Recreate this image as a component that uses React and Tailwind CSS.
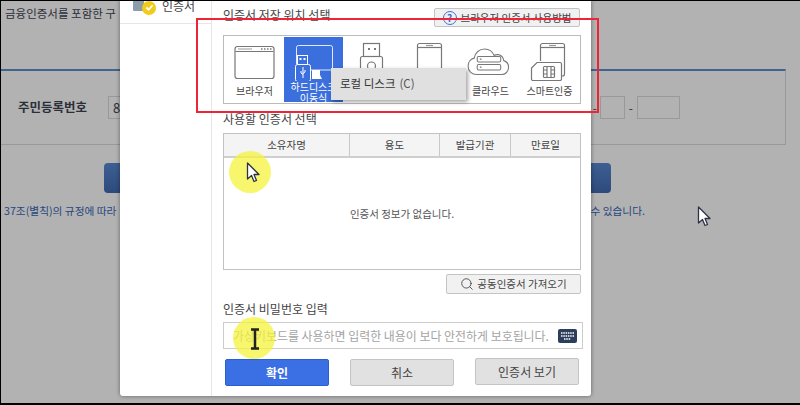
import { Search } from 'lucide-react';

const FONT = "font-['Noto_Sans_CJK_KR','Noto_Sans',sans-serif]";

const BrowserIcon = () => (
  <svg width="60" height="40" viewBox="0 0 60 40" fill="none" stroke="#777" strokeWidth="1.2">
    <rect x="10" y="5.500" width="39" height="32" rx="2.500" />
    <path d="M10.500 10.500h38" />
    <path d="M13 8h14" stroke="#aaa" />
    <path d="M36 8h1.500M39 8h1.500M42 8h1.500M45 8h1.500" strokeWidth="1.6" />
  </svg>
);

const DiskIcon = () => (
  <svg width="60" height="40" viewBox="0 0 60 40" fill="none" stroke="#fff" strokeWidth="1">
    <path d="M12.500 23V6.500a2 2 0 0 1 2-2h32a2 2 0 0 1 2 2V29H27" strokeOpacity=".85" />
    <path d="M28 29h8v5l2 4H28z" fill="#fff" stroke="none" />
    <rect x="13.500" y="14.500" width="10" height="9" fill="#3b6fdd" />
    <rect x="15.500" y="17" width="2" height="2" fill="#fff" stroke="none" />
    <rect x="19.500" y="17" width="2" height="2" fill="#fff" stroke="none" />
    <rect x="11.500" y="23.500" width="15" height="17" rx="2" fill="#3b6fdd" />
    <path d="M19 26v11M17 30v2l2 1.500M21 29v2l-2 1.500" />
  </svg>
);

const TokenIcon = () => (
  <svg width="60" height="40" viewBox="0 0 60 40" fill="none" stroke="#777" strokeWidth="1.2">
    <rect x="20.500" y="2.500" width="16" height="13" />
    <rect x="25" y="7" width="2" height="2" fill="#777" stroke="none" />
    <rect x="31" y="7" width="2" height="2" fill="#777" stroke="none" />
    <rect x="17.500" y="15.500" width="22" height="24" rx="2" />
    <circle cx="28.500" cy="25" r="4" />
    <path d="M23 36c0-5 11-5 11 0" />
  </svg>
);

const PhoneIcon = () => (
  <svg width="60" height="40" viewBox="0 0 60 40" fill="none" stroke="#777" strokeWidth="1.2">
    <path d="M15.500 40V4.500a2 2 0 0 1 2-2h20a2 2 0 0 1 2 2V40" />
    <path d="M16 6.500h23" />
    <path d="M24 4.500h7" stroke="#999" />
  </svg>
);

const CloudIcon = () => (
  <svg width="60" height="40" viewBox="0 0 60 40" fill="none" stroke="#777" strokeWidth="1.2">
    <g transform="translate(1 0) scale(.87 1)">
      <path d="M17 33.500c-6 0-10-3.600-10-8.300 0-4 3-7.200 7-8 1-5.500 6-9.200 12-9.200 5 0 9 2.500 11 6.500 1.500-.8 3-1 4.500-.8 3.500.5 6 3 6.500 6 3.500 1 5.500 3.500 5.500 6.500 0 4.300-3.500 7.300-8 7.300z" />
      <rect x="17.500" y="15.500" width="27" height="5.500" rx="1.500" />
      <rect x="17.500" y="23.500" width="27" height="5.500" rx="1.500" />
      <path d="M20.500 18.200h2M20.500 26.200h2" />
    </g>
  </svg>
);

const SmartIcon = () => (
  <svg width="60" height="40" viewBox="0 0 60 40" fill="none" stroke="#777" strokeWidth="1.2">
    <g transform="translate(6 0)">
      <path d="M14.500 20V4.500a2 2 0 0 1 2-2h20a2 2 0 0 1 2 2V33a2 2 0 0 1-2 2h-2" />
      <path d="M15 6.500h23" />
      <path d="M23 4.500h7" stroke="#999" />
      <path d="M11 21.500h23a1.500 1.500 0 0 1 1.500 1.500v15a1.500 1.500 0 0 1-1.500 1.500H7a1.500 1.500 0 0 1-1.500-1.500V27z" fill="#fff" />
      <rect x="17.500" y="25.500" width="11" height="11" rx="1" />
      <path d="M21 26v10M25 26v10M18 29h3M18 33h3M25 29h3M25 33h3" />
    </g>
  </svg>
);

const Arrow = ({ className }) => (
  <svg className={className} width="14" height="22" viewBox="0 0 14 22">
    <path d="M1.500 1v16l4-3.500 2.500 6 2.500-1-2.500-6H13z" fill="#fff" stroke="#2c3345" strokeWidth="1.300" strokeLinejoin="round" />
  </svg>
);

const Tile = ({ icon, label, active }) => (
  <div className={`flex-1 min-w-0 flex flex-col items-center pt-[4px] ${active ? 'bg-[#3b6fdd] text-white' : 'text-[#444]'}`}>
    <div className="h-[40px]">{icon}</div>
    <div className={`mt-auto text-center whitespace-nowrap text-[10px] leading-[11px] ${active ? 'pb-[2px]' : 'pb-[6px]'}`}>{label}</div>
  </div>
);

const columns = [
  { label: '소유자명', w: 'w-[126px]' },
  { label: '용도', w: 'w-[90px]' },
  { label: '발급기관', w: 'w-[71px]' },
  { label: '만료일', w: 'flex-1' },
];

export default function App() {
  return (
    <div className={`${FONT} relative w-[800px] h-[405px] overflow-hidden bg-[#b2b2b2] border-l border-t border-b-2 border-black`}>
      {/* dimmed page behind the dialog */}
      <div className="w-[785px] pt-[3px] text-[#2b2f38]">
        <div className="pl-[4px] text-[11.500px] leading-[18px]">금융인증서를 포함한 구</div>
        <div className="mt-[47px] h-[76px] border-t-2 border-r border-b border-t-[#3e648f] border-r-[#999] border-b-[#999] flex items-center">
          <div className="ml-[17px] w-[90px] text-[12.500px] font-bold">주민등록번호</div>
          <div className="w-[40px] h-[23px] border border-[#999] text-[13px] pl-[4px] leading-[21px]">8</div>
          <div className="ml-auto flex items-center mr-[105px]">
            <span className="text-[12px] mr-[3px]">-</span>
            <div className="w-[25px] h-[23px] border border-[#999]" />
            <span className="text-[12px] mx-[4px]">-</span>
            <div className="w-[43px] h-[23px] border border-[#999]" />
          </div>
        </div>
        <div className="mt-[18px] ml-[103px] w-[507px] h-[30px] rounded-[4px] bg-gradient-to-b from-[#3d5f93] to-[#2e4a7c]" />
        <div className="mt-[10px] flex justify-between w-[644px] pl-[3px] text-[10.700px] leading-[16px] text-[#26477e]">
          <span>37조(별칙)의 규정에 따라</span>
          <span>수 있습니다.</span>
        </div>
      </div>

      <Arrow className="absolute left-[696px] top-[205px]" />

      {/* certificate dialog */}
      <div className="absolute left-[119px] top-[-1px] w-[471px] h-[396px] flex bg-white rounded-b-[3px] shadow-[0_0_4px_rgba(0,0,0,0.45)] text-[#444]">
        <div className="w-[92px] shrink-0 border-r border-[#e6e6e6]">
          <div className="h-[24px] border-b border-[#e6e6e6] flex items-center pl-[13px]">
            <span className="w-[11px] h-[11px] rounded-[1px] bg-[#8d9cab] -mt-[12px]" />
            <span className="-ml-[2px] -mt-[8px] w-[14px] h-[14px] rounded-full bg-[#f2cb1d] flex items-center justify-center">
              <svg width="9" height="9" viewBox="0 0 10 10" fill="none" stroke="#fff" strokeWidth="2">
                <path d="M1.500 5l2.500 2.500L8.500 2.500" />
              </svg>
            </span>
            <span className="ml-[6px] -mt-[11px] text-[12px] leading-[18px]">인증서</span>
          </div>
        </div>

        <div className="flex-1 min-w-0 pl-[11px] pr-[10px] pt-[6px] flex flex-col">
          <div className="flex items-center justify-between h-[22px]">
            <span className="text-[12px] -mt-[5px]">인증서 저장 위치 선택</span>
            <button className="w-[146px] h-[19px] mr-[1px] mt-[1px] rounded-[2px] border border-[#c4c4c4] bg-[#f1f1f1] flex items-center justify-center gap-[4px] text-[10.500px]">
              <span className="w-[14px] h-[14px] rounded-full border border-[#3b6fdd] text-[#3b6fdd] text-[10px] leading-[12px] font-bold text-center">?</span>
              브라우저 인증서 사용방법
            </button>
          </div>

          <div className="mt-[7px] h-[69px] border border-[#bbb] p-[1px] flex">
            <Tile icon={<BrowserIcon />} label="브라우저" />
            <Tile icon={<DiskIcon />} label={<>하드디스크<br />이동식</>} active />
            <Tile icon={<TokenIcon />} label="보안토큰" />
            <Tile icon={<PhoneIcon />} label="휴대폰" />
            <Tile icon={<CloudIcon />} label="클라우드" />
            <Tile icon={<SmartIcon />} label="스마트인증" />
          </div>

          <div className="mt-[6px] text-[12px] leading-[18px]">사용할 인증서 선택</div>

          <div className="mt-[5px] h-[137px] border border-[#c2c2c2] flex flex-col">
            <div className="h-[24px] flex bg-[#f4f4f4] border-b-2 border-[#cfcfcf] text-[10.500px]">
              {columns.map((c, i) => (
                <div key={c.label} className={`${c.w} flex items-center justify-center ${i < 3 ? 'border-r border-[#c8c8c8]' : ''}`}>
                  {c.label}
                </div>
              ))}
            </div>
            <div className="flex-1 flex items-center justify-center text-[10.500px] text-[#555]">인증서 정보가 없습니다.</div>
          </div>

          <button className="mt-[4px] self-end w-[135px] h-[20px] rounded-[2px] border border-[#c4c4c4] bg-[#f1f1f1] flex items-center justify-center gap-[3px] text-[10.500px]">
            <Search size={14} strokeWidth={1.500} className="text-[#444]" />
            공동인증서 가져오기
          </button>

          <div className="mt-[6px] text-[12px] leading-[18px]">인증서 비밀번호 입력</div>

          <div className="mt-[4px] w-[360px] h-[27px] border border-[#ccc] flex items-center pl-[9px] pr-[5px] text-[11.950px] text-[#a3a3a3]">
            <span className="flex-1 whitespace-nowrap">가상키보드를 사용하면 입력한 내용이 보다 안전하게 보호됩니다.</span>
            <svg width="19" height="14" viewBox="0 0 19 14">
              <rect width="19" height="14" rx="2" fill="#2d3e5c" />
              <path d="M3 4h13M3 7h13M6 10h7" stroke="#fff" strokeWidth="1.500" strokeDasharray="1.500 .8" />
            </svg>
          </div>

          <div className="mt-[10px] flex items-start px-[2px] justify-between text-[12px]">
            <button className="w-[104px] h-[27px] rounded-[2px] bg-[#3b6fe4] border border-[#2b5fd0] text-white font-bold">확인</button>
            <button className="w-[104px] h-[27px] rounded-[2px] bg-[#e1e1e1] border border-[#c4c4c4]">취소</button>
            <button className="w-[104px] h-[27px] -mt-[1px] rounded-[2px] bg-[#e1e1e1] border border-[#c4c4c4]">인증서 보기</button>
          </div>
        </div>
      </div>

      {/* drive tooltip over the tiles */}
      <div className="absolute left-[330px] top-[67px] w-[135px] h-[32px] bg-[#e0e0e0] shadow-[2px_2px_4px_rgba(0,0,0,0.35)] flex items-center pl-[9px] text-[11.500px] text-[#333]">
        로컬 디스크 <span className="ml-[4px] text-[#555]">(C)</span>
      </div>

      {/* recording annotations */}
      <div className="absolute left-[195px] top-[17px] w-[403px] h-[95px] border-2 border-[#ee2536]" />
      <div className="absolute left-[228px] top-[150px] w-[42px] h-[42px] rounded-full bg-[#f6f33c]/75" />
      <div className="absolute left-[232px] top-[316px] w-[42px] h-[42px] rounded-full bg-[#f6f33c]/75" />
      <Arrow className="absolute left-[245px] top-[161px]" />
      <svg className="absolute left-[248px] top-[327px]" width="12" height="22" viewBox="0 0 12 22" fill="none">
        <path d="M2 1.500h8M2 20.500h8M6 1.500v19" stroke="#222" strokeWidth="2.500" />
      </svg>
    </div>
  );
}
